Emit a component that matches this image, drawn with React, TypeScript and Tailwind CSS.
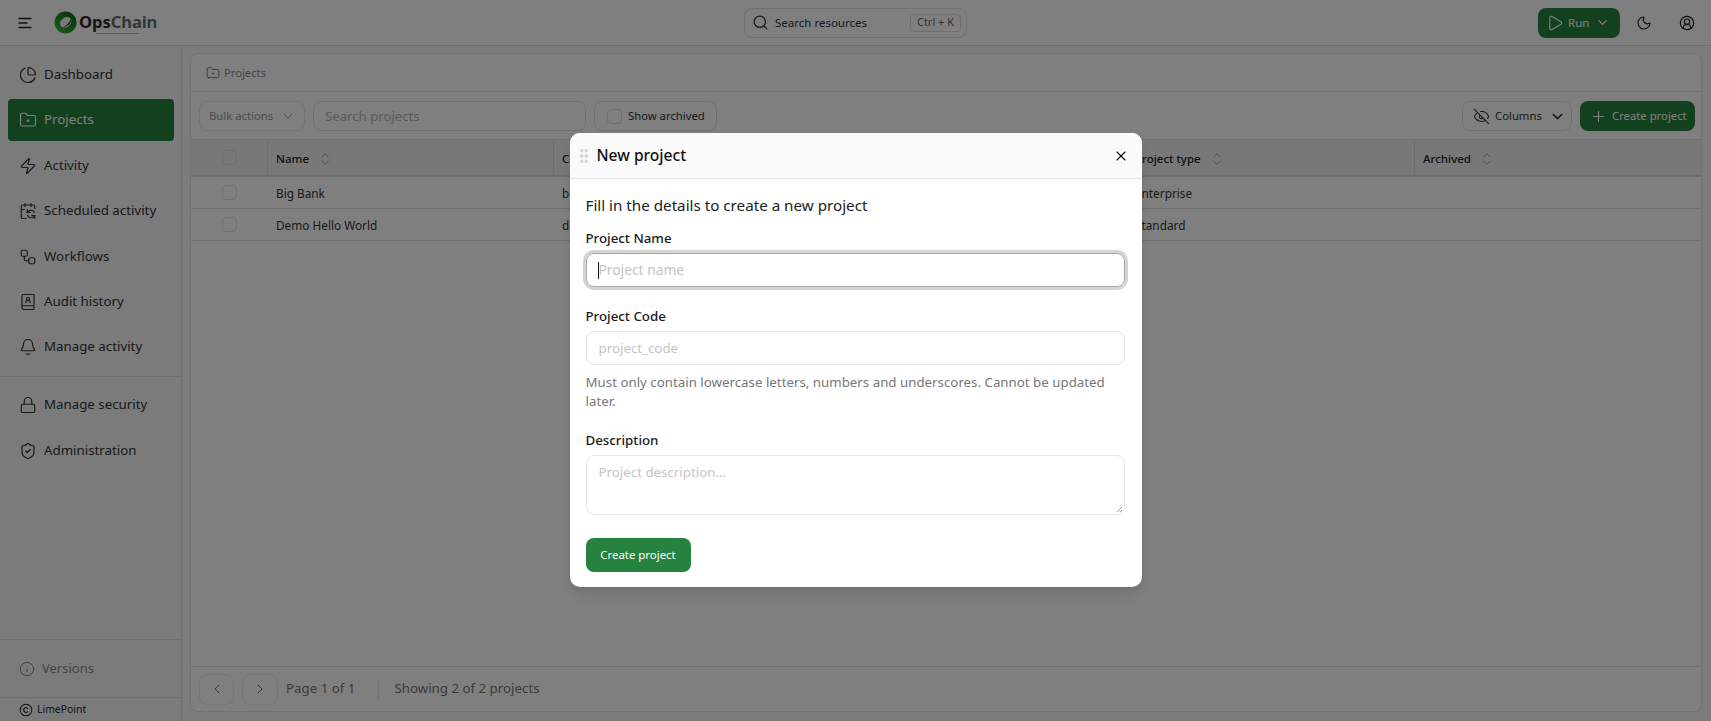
import { BookUser, Bell, CalendarSync, ChartPie, ChevronDown, ChevronLeft, ChevronRight, ChevronsUpDown, CircleUserRound, Copyright, EyeOff, FolderDot, GripVertical, Info, Lock, Moon, Play, Plus, Search, ShieldCheck, Workflow, X, Zap } from "lucide-react";
import type { ComponentType } from "react";

type Icon = ComponentType<{ className?: string; strokeWidth?: number }>;

const group1: [string, Icon][] = [
  ["Dashboard", ChartPie],
  ["Projects", FolderDot],
  ["Activity", Zap],
  ["Scheduled activity", CalendarSync],
  ["Workflows", Workflow],
  ["Audit history", BookUser],
  ["Manage activity", Bell],
];
const group2: [string, Icon][] = [
  ["Manage security", Lock],
  ["Administration", ShieldCheck],
];

function NavItem({ label, icon: I }: { label: string; icon: Icon }) {
  const active = label === "Projects";
  return (
    <div className={`mr-[7px] ml-2 flex h-[42px] items-center gap-[7px] rounded-[4px] pl-[11px] text-[13.3px] ${active ? "bg-[#26833f] text-white" : "text-[#333333]"}`}>
      <I className="size-[18px]" strokeWidth={1.6} />
      <span>{label}</span>
    </div>
  );
}

function Box() {
  return <div className="size-[15px] rounded-[4px] border border-[#e0e0e0]" />;
}

function Sort() {
  return <ChevronsUpDown className="size-4 text-[#a0a0a0]" strokeWidth={1.4} />;
}

function Th({ label, w, border = true }: { label: string; w: string; border?: boolean }) {
  return (
    <div className={`flex items-center gap-2 pt-[2px] pl-2 ${w} ${border ? "border-r border-[#dcdcdc]" : ""}`}>
      <span>{label}</span>
      <Sort />
    </div>
  );
}

function Row({ name, code, type }: { name: string; code: string; type: string }) {
  return (
    <div className="flex h-8 border-b border-[#dedede] text-[11.8px] text-[#333333]">
      <div className="flex w-[77px] items-center justify-center"><Box /></div>
      <div className="flex w-[286px] items-center pt-[2px] pl-2">{name}</div>
      <div className="flex w-[573px] items-center pt-[2px] pl-2">{code}</div>
      <div className="flex flex-1 items-center pt-[2px] pl-2">{type}</div>
    </div>
  );
}

function Label({ children }: { children: string }) {
  return <div className="h-[19px] text-[13.3px] leading-[19px] font-medium text-[#1a1a1a]">{children}</div>;
}

export default function App() {
  return (
    <div className="relative flex h-screen flex-col overflow-hidden bg-[#f6f6f6] font-['Noto_Sans',sans-serif]">
      <header className="flex h-[46px] shrink-0 items-center border-b border-[#dedede] bg-white">
        <svg viewBox="0 0 16 16" className="ml-[17px] size-[16px] text-[#222222]" fill="none" stroke="currentColor" strokeWidth="1.3" strokeLinecap="round">
          <path d="M2 3.5h12M2 8h8M2 12.5h12" />
        </svg>
        <div className="ml-[21px] flex w-[690px] items-center">
          <svg viewBox="0 0 24 24" className="size-[23px]">
            <defs>
              <linearGradient id="logoGreen" x1="0.1" y1="1" x2="0.9" y2="0">
                <stop offset="0" stopColor="#3fb83a" />
                <stop offset="1" stopColor="#0f5f1c" />
              </linearGradient>
            </defs>
            <circle cx="12" cy="12" r="11.5" fill="url(#logoGreen)" />
            <ellipse cx="12.2" cy="11.8" rx="6.4" ry="5" transform="rotate(-35 12.2 11.8)" fill="#f2f2f2" />
            <path d="M18 7.2c.6 4.8-3 9.2-8.5 9.2 3.7-1 6.6-4.2 8.5-9.2z" fill="#14601f" />
          </svg>
          <div className="relative ml-[2px] text-[16.6px] font-bold tracking-[-0.1px] text-[#6b6b6b]">
            <span className="text-[#2a2a2a]">Ops</span>Chain
            <div className="absolute top-[23px] left-[17px] h-px w-[43px] bg-[#a8c4b0]" />
          </div>
        </div>
        <div className="flex h-[30px] w-[223px] items-center rounded-[8px] border border-[#e0e0e0] pr-[5px] pl-[7px] text-[11.5px] text-[#333333]">
          <Search className="size-[17px]" strokeWidth={1.75} />
          <span className="ml-[6px]">Search resources</span>
          <span className="ml-auto flex h-[18px] w-[51px] items-center justify-center rounded-[4px] border border-[#dddddd] text-[11px] text-[#666666]">Ctrl + K</span>
        </div>
        <button className="ml-auto flex h-[30px] w-[82px] items-center rounded-[8px] bg-[#26833f] pl-[8px] text-[11.5px] text-white">
          <Play className="size-[18px]" strokeWidth={1.5} />
          <span className="ml-[4px]">Run</span>
          <ChevronDown className="ml-[6px] size-[15px]" strokeWidth={1.75} />
        </button>
        <Moon className="ml-4 size-4 text-[#222222]" strokeWidth={1.75} />
        <CircleUserRound className="mr-[16px] ml-[27px] size-4 text-[#222222]" strokeWidth={1.75} />
      </header>

      <div className="flex min-h-0 flex-1">
        <aside className="flex w-[182px] shrink-0 flex-col border-r border-[#dedede] pt-2">
          <div className="flex flex-col gap-[3.4px]">
            {group1.map(([l, i]) => <NavItem key={l} label={l} icon={i} />)}
          </div>
          <div className="mt-[8px] mb-[7px] border-t border-[#dedede]" />
          <div className="flex flex-col gap-[3.4px]">
            {group2.map(([l, i]) => <NavItem key={l} label={l} icon={i} />)}
          </div>
          <div className="mt-auto border-t border-[#dedede]">
            <div className="flex h-[57px] items-center gap-[7px] pl-[19px] text-[13px] text-[#888888]">
              <Info className="size-4" strokeWidth={1.5} />
              <span>Versions</span>
            </div>
          </div>
          <div className="flex h-6 items-center gap-[4px] border-t border-[#dedede] pl-[19px] text-[10.4px] text-[#222222]">
            <Copyright className="size-[14px]" strokeWidth={1.75} />
            <span>LimePoint</span>
          </div>
        </aside>

        <main className="flex min-w-0 flex-1 flex-col pt-[7px] pr-[9px] pb-[9px] pl-2">
          <section className="flex flex-1 flex-col rounded-[8px] border border-[#e4e4e4] bg-white">
            <div className="flex h-[38px] shrink-0 items-center gap-[4px] border-b border-[#e4e4e4] pt-px pl-[15px] text-[11.2px] text-[#888888]">
              <FolderDot className="size-[14px] text-[#666666]" strokeWidth={1.5} />
              <span>Projects</span>
            </div>
            <div className="flex h-[47px] shrink-0 items-center pt-px pr-[6px] pl-2 text-[11.3px]">
              <div className="flex h-[30px] w-[106px] items-center rounded-[8px] border border-[#e8e8e8] pl-[9px] text-[#999999]">
                <span>Bulk actions</span>
                <ChevronDown className="ml-[7px] size-4" strokeWidth={1.5} />
              </div>
              <div className="ml-2 flex h-[30px] w-[273px] items-center rounded-[8px] border border-[#e0e0e0] pt-px pl-[11px] text-[13.2px] text-[#b5b5b5]">Search projects</div>
              <div className="ml-2 flex h-[30px] w-[123px] items-center gap-[6px] rounded-[8px] border border-[#e0e0e0] pl-3 text-[#333333]">
                <div className="size-[15px] rounded-[4px] border border-[#dddddd]" />
                <span>Show archived</span>
              </div>
              <div className="ml-auto flex h-[30px] w-[110px] items-center rounded-[8px] border border-[#e0e0e0] pl-[10px] text-[#333333]">
                <EyeOff className="size-[17px]" strokeWidth={1.5} />
                <span className="ml-[5px]">Columns</span>
                <ChevronDown className="ml-[7px] size-[17px]" strokeWidth={2} />
              </div>
              <div className="ml-2 flex h-[30px] w-[115px] items-center rounded-[8px] bg-[#26833f] pl-[10px] text-white">
                <Plus className="size-[17px]" strokeWidth={1.5} />
                <span className="ml-[5px]">Create project</span>
              </div>
            </div>
            <div className="flex h-[38px] shrink-0 border-y-2 border-t border-[#dcdcdc] bg-[#f1f1f1] text-[11.5px] font-medium text-[#222222]">
              <div className="flex w-[77px] items-center justify-center border-r border-[#dcdcdc]"><Box /></div>
              <Th label="Name" w="w-[286px]" />
              <Th label="Code" w="w-[573px]" />
              <Th label="Project type" w="w-[288px]" />
              <Th label="Archived" w="flex-1" border={false} />
            </div>
            <Row name="Big Bank" code="big_bank" type="Enterprise" />
            <Row name="Demo Hello World" code="demo_hello_world" type="Standard" />
            <div className="flex-1" />
            <div className="flex h-[45px] shrink-0 items-center border-t border-[#e4e4e4] pl-2 text-[13.3px] text-[#777777]">
              <div className="flex h-[31px] w-[35px] items-center justify-center rounded-[8px] border border-[#eeeeee]"><ChevronLeft className="size-4" strokeWidth={1.5} /></div>
              <div className="ml-2 flex h-[31px] w-[36px] items-center justify-center rounded-[8px] border border-[#eeeeee]"><ChevronRight className="size-4" strokeWidth={1.5} /></div>
              <span className="ml-[8px]">Page 1 of 1</span>
              <div className="mr-[15px] ml-[23px] h-[20px] w-px bg-[#e4e4e4]" />
              <span>Showing 2 of 2 projects</span>
            </div>
          </section>
        </main>
      </div>

      <div className="absolute inset-0 flex items-center justify-center bg-black/50 pb-px">
        <div className="w-[572px] overflow-hidden rounded-[10px] bg-white shadow-lg">
          <div className="flex h-[46px] items-center border-b border-[#e6e6e6] bg-[#fafafa] pr-[13px] pl-[5px]">
            <GripVertical className="size-[18px] text-[#d2d2d2]" strokeWidth={2.5} />
            <span className="ml-[4px] text-[15.6px] font-medium text-[#111111]">New project</span>
            <X className="ml-auto size-4 text-[#111111]" strokeWidth={1.75} />
          </div>
          <div className="flex flex-col pt-4 pr-[17px] pb-[15px] pl-4">
            <div className="text-[15.2px] leading-[20px] text-[#222222]">Fill in the details to create a new project</div>
            <div className="mt-[14px]"><Label>Project Name</Label></div>
            <div className="relative mt-[5px] flex h-[34px] items-center rounded-[8px] border border-[#a8a8a8] pt-px pl-3 text-[13.8px] text-[#c4c4c4] ring-[3px] ring-[#d4d4d4]">
              Project name
              <div className="absolute top-[8px] left-[11px] h-[17px] w-px bg-[#111111]" />
            </div>
            <div className="mt-5"><Label>Project Code</Label></div>
            <div className="mt-[5px] flex h-[34px] items-center rounded-[8px] border border-[#e6e6e6] pt-px pl-3 text-[13.3px] text-[#c4c4c4]">project_code</div>
            <div className="mt-[8px] text-[13.3px] leading-[19px] text-[#777777]">Must only contain lowercase letters, numbers and underscores. Cannot be updated later.</div>
            <div className="mt-5"><Label>Description</Label></div>
            <div className="relative mt-[5px] h-[60px] rounded-[8px] border border-[#e6e6e6] pt-[6px] pl-3 text-[13.3px] leading-[20px] text-[#c4c4c4]">
              Project description...
              <svg viewBox="0 0 8 8" className="absolute right-[1px] bottom-[1px] size-[7px]" stroke="#555555" strokeWidth="0.7"><path d="M1 7 7 1M4.5 7 7 4.5" /></svg>
            </div>
            <button className="mt-[23px] flex h-[34px] w-[105px] items-center justify-center rounded-[8px] bg-[#26833f] text-[11.4px] text-white">Create project</button>
          </div>
        </div>
      </div>
    </div>
  );
}
